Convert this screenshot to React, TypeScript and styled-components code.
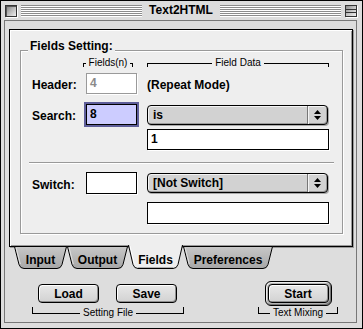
import React from "react";
import styled, { createGlobalStyle } from "styled-components";

const GlobalStyle = createGlobalStyle`
  html, body { margin: 0; padding: 0; background: #ffffff; }
  body { font-family: "Liberation Sans", Arial, sans-serif; color: #000; }
  *, *::before, *::after { box-sizing: border-box; }
`;

const SYS = `font-family: "Liberation Sans", Arial, sans-serif; font-weight: 700; font-size: 12px;`;
const SMALL = `font-family: "Liberation Sans", Arial, sans-serif; font-weight: 400; font-size: 10px; line-height: 12px;`;

const Window = styled.div`
  width: 363px;
  height: 329px;
  border: 1px solid #000;
  background: #dddddd;
  display: flex;
  flex-direction: column;
`;

const TitleBar = styled.div`
  height: 19px;
  flex: none;
  display: flex;
  align-items: center;
  gap: 4px;
  padding: 0 5px 0 4px;
`;

const CloseBox = styled.div`
  width: 12px;
  height: 12px;
  flex: none;
  border: 1px solid #333;
  background: linear-gradient(135deg, #7a7a7a 0%, #b4b4b4 45%, #f0f0f0 100%);
  box-shadow: 1px 1px 0 #ffffff, inset 1px 1px 0 #555;
`;

const ShadeBox = styled.div`
  width: 12px;
  height: 12px;
  flex: none;
  border: 1px solid #333;
  background:
    linear-gradient(to bottom, transparent 0 3px, #333 3px 4px, transparent 4px 6px, #333 6px 7px, transparent 7px),
    linear-gradient(135deg, #8a8a8a 0%, #c4c4c4 50%, #f0f0f0 100%);
  box-shadow: 1px 1px 0 #ffffff;
`;

const Stripes = styled.div`
  flex: 1;
  height: 12px;
  background: repeating-linear-gradient(to bottom, #8c8c8c 0 1px, #ffffff 1px 2px);
`;

const Title = styled.div`
  ${SYS};
  line-height: 19px;
  padding: 0 3px;
`;

const Frame = styled.div`
  flex: 1;
  margin: 0 5px 5px 3px;
  border: 1px solid #777;
  padding-top: 8px;
  display: flex;
  flex-direction: column;
`;

const Panel = styled.div`
  margin-left: 4px;
  width: 344px;
  height: 218px;
  flex: none;
  border: 1px solid #000;
  background: #eeeeee;
  box-shadow: inset 1px 1px 0 #ffffff, inset -1px -1px 0 #999999, 1px 1px 0 #999999;
  padding: 20px 0 0 10px;
`;

const GroupBox = styled.div`
  position: relative;
  width: 323px;
  height: 184px;
  border: 1px solid #999999;
  box-shadow: 1px 1px 0 #ffffff, inset 1px 1px 0 #ffffff;
  display: flex;
  flex-direction: column;
  padding: 6px 0 0 11px;
`;

const GroupTitle = styled.div`
  position: absolute;
  top: -12px;
  left: 7px;
  padding: 0 2px;
  background: #eeeeee;
  ${SYS};
  line-height: 14px;
`;

const Row = styled.div<{ $h: number; $mt: number }>`
  display: flex;
  align-items: center;
  height: ${(p) => p.$h}px;
  margin-top: ${(p) => p.$mt}px;
`;

const Label = styled.div`
  width: 54px;
  flex: none;
  ${SYS};
  line-height: 14px;
  padding-top: 3px;
`;

const FieldCell = styled.div`
  width: 51px;
  flex: none;
  display: flex;
`;

const DataCell = styled.div`
  width: 182px;
  flex: none;
  margin-left: 10px;
  display: flex;
`;

const Note = styled.div`
  ${SYS};
  line-height: 14px;
  padding-top: 2px;
`;

const TopBracket = styled.div<{ $w: number; $shift?: number }>`
  width: ${(p) => p.$w}px;
  margin-left: ${(p) => p.$shift ?? 0}px;
  height: 12px;
  display: flex;
  align-items: flex-start;
  gap: 3px;
  ${SMALL};
`;

const TopLine = styled.span<{ $side: "left" | "right" }>`
  flex: 1;
  margin-top: 6px;
  height: 4px;
  border-top: 1px solid #000;
  border-${(p) => p.$side}: 1px solid #000;
`;

type BoxVariant = "normal" | "disabled" | "focused";

const TextBox = styled.div<{ $w: number; $h?: number; $variant?: BoxVariant }>`
  width: ${(p) => p.$w}px;
  height: ${(p) => p.$h ?? 21}px;
  flex: none;
  border: 1px solid ${(p) => (p.$variant === "disabled" ? "#9a9a9a" : "#000")};
  background: ${(p) => (p.$variant === "focused" ? "#ccccff" : "#ffffff")};
  color: ${(p) => (p.$variant === "disabled" ? "#8a8a8a" : "#000")};
  box-shadow: ${(p) =>
    p.$variant === "focused" ? "0 0 0 2px #5e5e9a" : "1px 1px 0 #ffffff"};
  ${SYS};
  line-height: ${(p) => (p.$h ?? 21) - 2}px;
  padding-left: 3px;
`;

const Popup = styled.div`
  width: 181px;
  height: 20px;
  flex: none;
  display: flex;
  border: 1px solid #000;
  border-radius: 4px;
  background: #d2d2d2;
  box-shadow: inset 1px 1px 0 #f4f4f4, inset -1px -1px 0 #9a9a9a, 1px 1px 0 #aaaaaa;
  overflow: hidden;
`;

const PopupText = styled.span`
  flex: 1;
  padding-left: 5px;
  ${SYS};
  line-height: 19px;
`;

const PopupArrows = styled.span`
  width: 20px;
  flex: none;
  border-left: 1px solid #777;
  box-shadow: inset 1px 0 0 #f4f4f4;
  display: flex;
  align-items: center;
  justify-content: center;
`;

const Separator = styled.div`
  margin: 12px 0 0 -3px;
  width: 305px;
  height: 2px;
  border-top: 1px solid #999999;
  border-bottom: 1px solid #ffffff;
`;

const TabRow = styled.div`
  display: flex;
  margin: -2px 0 0 9px;
  height: 25px;
  position: relative;
  z-index: 1;
`;

const TabItem = styled.div<{ $w: number }>`
  position: relative;
  width: ${(p) => p.$w}px;
  height: 25px;
  flex: none;
  display: flex;
  justify-content: center;
  align-items: center;
  padding-top: 4px;
`;

const TabShape = styled.svg`
  position: absolute;
  left: 0;
  top: 0;
`;

const TabLabel = styled.span`
  position: relative;
  ${SYS};
  line-height: 14px;
`;

const BottomBar = styled.div`
  display: flex;
  justify-content: space-between;
  padding: 0 18px 0 27px;
  margin-top: 11px;
`;

const ButtonGroup = styled.div<{ $w: number }>`
  width: ${(p) => p.$w}px;
  display: flex;
  flex-direction: column;
`;

const ButtonArea = styled.div<{ $center?: boolean }>`
  height: 25px;
  display: flex;
  align-items: center;
  justify-content: ${(p) => (p.$center ? "center" : "flex-start")};
  gap: 17px;
  padding-left: ${(p) => (p.$center ? 0 : 6)}px;
`;

const Button = styled.div`
  width: 61px;
  height: 19px;
  border: 1px solid #000;
  border-radius: 4px;
  background: linear-gradient(to bottom, #e8e8e8, #d2d2d2);
  box-shadow: inset 1px 1px 0 #ffffff, inset -1px -1px 0 #8f8f8f;
  display: flex;
  align-items: center;
  justify-content: center;
  ${SYS};
  line-height: 14px;
`;

const DefaultRing = styled.div`
  border: 1px solid #000;
  border-radius: 6px;
  padding: 2px;
  background: #b4b4b4;
  box-shadow: inset 1px 1px 0 #eeeeee, inset -1px -1px 0 #777777;
`;

const BottomBracket = styled.div`
  margin-top: 1px;
  height: 12px;
  display: flex;
  align-items: flex-start;
  gap: 3px;
  ${SMALL};
`;

const BottomLine = styled.span<{ $side: "left" | "right" }>`
  flex: 1;
  height: 7px;
  border-bottom: 1px solid #000;
  border-${(p) => p.$side}: 1px solid #000;
`;

const UpDown = () => (
  <svg width="7" height="10" viewBox="0 0 7 10">
    <polygon points="3.5,0 7,4 0,4" fill="#000" />
    <polygon points="0,6 7,6 3.5,10" fill="#000" />
  </svg>
);

const Tab = ({ w, label, selected }: { w: number; label: string; selected?: boolean }) => {
  const h = 25;
  const y0 = selected ? 0 : 1.5;
  const b = h - 1.5;
  const sides = `M0.5,${y0} L5,${b - 4} Q6.2,${b} 10,${b} L${w - 10},${b} Q${w - 6.2},${b} ${w - 5},${b - 4} L${w - 0.5},${y0}`;
  const gid = `tabfill-${label}`;
  return (
    <TabItem $w={w}>
      <TabShape width={w} height={h} viewBox={`0 0 ${w} ${h}`}>
        <defs>
          <linearGradient id={gid} x1="0" y1="0" x2="0" y2="1">
            <stop offset="0" stopColor="#c8c8c8" />
            <stop offset="1" stopColor="#a6a6a6" />
          </linearGradient>
        </defs>
        {selected ? (
          <>
            <path d={`${sides} Z`} fill="#eeeeee" stroke="none" />
            <path
              d={`M2,${y0 + 1} L6.3,${b - 4.5}`}
              stroke="#ffffff"
              strokeWidth="1"
              fill="none"
            />
            <path d={`M10,${b - 1} L${w - 10},${b - 1}`} stroke="#b0b0b0" fill="none" />
            <path d={sides} stroke="#000" strokeWidth="1" fill="none" />
          </>
        ) : (
          <>
            <path d={`${sides} Z`} fill={`url(#${gid})`} stroke="#000" strokeWidth="1" />
            <path
              d={`M2.2,${y0 + 1.5} L6.3,${b - 4.5}`}
              stroke="#e2e2e2"
              strokeWidth="1"
              fill="none"
            />
          </>
        )}
      </TabShape>
      <TabLabel>{label}</TabLabel>
    </TabItem>
  );
};

export default function App() {
  return (
    <>
      <GlobalStyle />
      <Window>
        <TitleBar>
          <CloseBox />
          <Stripes />
          <Title>Text2HTML</Title>
          <Stripes />
          <ShadeBox />
        </TitleBar>
        <Frame>
          <Panel>
            <GroupBox>
              <GroupTitle>Fields Setting:</GroupTitle>
              <Row $h={12} $mt={0}>
                <Label />
                <FieldCell>
                  <TopBracket $w={50} $shift={-3}>
                    <TopLine $side="left" />
                    <span>Fields(n)</span>
                    <TopLine $side="right" />
                  </TopBracket>
                </FieldCell>
                <DataCell>
                  <TopBracket $w={182}>
                    <TopLine $side="left" />
                    <span>Field Data</span>
                    <TopLine $side="right" />
                  </TopBracket>
                </DataCell>
              </Row>
              <Row $h={21} $mt={4}>
                <Label>Header:</Label>
                <FieldCell>
                  <TextBox $w={51} $variant="disabled">4</TextBox>
                </FieldCell>
                <DataCell>
                  <Note>(Repeat Mode)</Note>
                </DataCell>
              </Row>
              <Row $h={21} $mt={10}>
                <Label>Search:</Label>
                <FieldCell>
                  <TextBox $w={51} $variant="focused">8</TextBox>
                </FieldCell>
                <DataCell>
                  <Popup>
                    <PopupText>is</PopupText>
                    <PopupArrows>
                      <UpDown />
                    </PopupArrows>
                  </Popup>
                </DataCell>
              </Row>
              <Row $h={21} $mt={4}>
                <Label />
                <FieldCell />
                <DataCell>
                  <TextBox $w={182}>1</TextBox>
                </DataCell>
              </Row>
              <Separator />
              <Row $h={22} $mt={8}>
                <Label>Switch:</Label>
                <FieldCell>
                  <TextBox $w={51} $h={22} />
                </FieldCell>
                <DataCell>
                  <Popup>
                    <PopupText>[Not Switch]</PopupText>
                    <PopupArrows>
                      <UpDown />
                    </PopupArrows>
                  </Popup>
                </DataCell>
              </Row>
              <Row $h={22} $mt={8}>
                <Label />
                <FieldCell />
                <DataCell>
                  <TextBox $w={182} $h={22} />
                </DataCell>
              </Row>
            </GroupBox>
          </Panel>
          <TabRow>
            <Tab w={53} label="Input" />
            <Tab w={61} label="Output" />
            <Tab w={55} label="Fields" selected />
            <Tab w={90} label="Preferences" />
          </TabRow>
          <BottomBar>
            <ButtonGroup $w={152}>
              <ButtonArea>
                <Button>Load</Button>
                <Button>Save</Button>
              </ButtonArea>
              <BottomBracket>
                <BottomLine $side="left" />
                <span>Setting File</span>
                <BottomLine $side="right" />
              </BottomBracket>
            </ButtonGroup>
            <ButtonGroup $w={80}>
              <ButtonArea $center>
                <DefaultRing>
                  <Button>Start</Button>
                </DefaultRing>
              </ButtonArea>
              <BottomBracket>
                <BottomLine $side="left" />
                <span>Text Mixing</span>
                <BottomLine $side="right" />
              </BottomBracket>
            </ButtonGroup>
          </BottomBar>
        </Frame>
      </Window>
    </>
  );
}
